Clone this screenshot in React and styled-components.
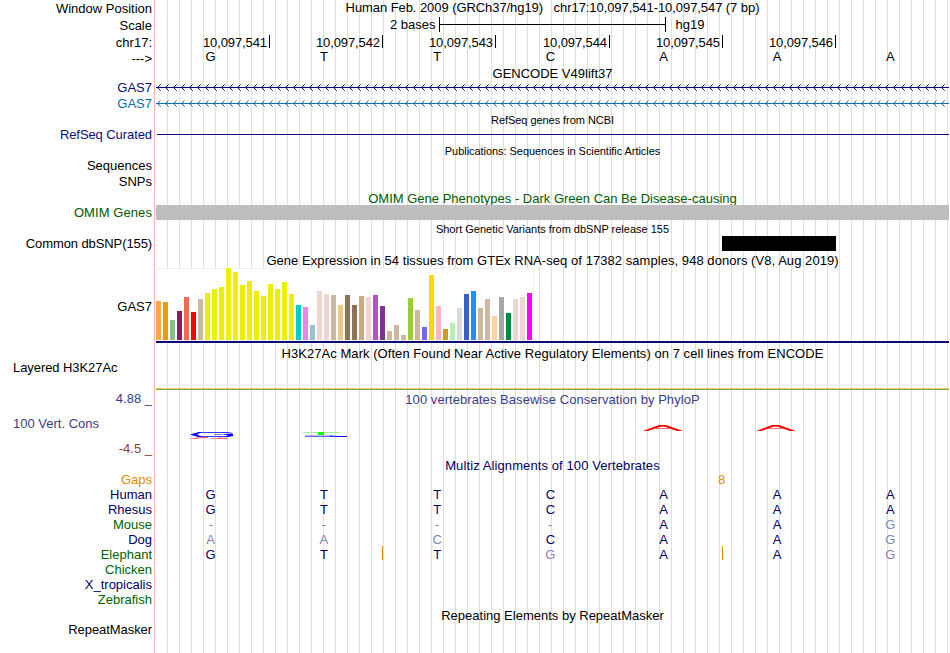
import React from "react";
import styled, { createGlobalStyle } from "styled-components";

const NAVY = "#0c0c78";
const BLUE = "#0c6cb4";
const SPECIES_BLUE = "#000064";
const SPECIES_GREEN = "#006400";
const OMIM_GREEN = "#005a00";
const PHYLO_BLUE = "#3c3c8c";
const ORANGE = "#e68a00";
const FADED = "#8484b8";

const GlobalStyle = createGlobalStyle`
  body { margin: 0; background: #fff; overflow: hidden; }
`;

const Browser = styled.main`
  width: 949px;
  height: 653px;
  overflow: hidden;
  font-family: "Liberation Sans", Arial, sans-serif;
  font-size: 13px;
  color: #000;
  white-space: pre;
  background:
    linear-gradient(#ffb4b4, #ffb4b4) 154px 0 / 1px 100% no-repeat,
    repeating-linear-gradient(90deg, #dcdcfa 0 1px, transparent 1px 12px) 167px 0 / 782px 100% no-repeat,
    #fff;
`;

const Row = styled.div`
  display: grid;
  grid-template-columns: 156px 793px;
  height: ${(p) => p.$h}px;
`;

const Label = styled.div`
  padding: ${(p) => p.$top || 0}px 4px 0 13px;
  text-align: ${(p) => (p.$left ? "left" : "right")};
  line-height: 15px;
  color: ${(p) => p.$color || "#000"};
  letter-spacing: ${(p) => p.$ls || 0}px;
`;

const Title = styled.div`
  grid-column: 2;
  text-align: center;
  padding-top: ${(p) => p.$top || 0}px;
  line-height: 15px;
  font-size: ${(p) => (p.$small ? 11 : 13)}px;
  color: ${(p) => p.$color || "#000"};
  letter-spacing: ${(p) => p.$ls || 0}px;
`;

const Drawing = styled.svg`
  display: block;
  width: 793px;
  height: ${(p) => p.$h}px;
  shape-rendering: ${(p) => (p.$smooth ? "auto" : "crispEdges")};
`;

const Bases = styled.div`
  display: grid;
  grid-template-columns: repeat(7, 113.28px);
  line-height: ${(p) => p.$lh || 15}px;
`;

const Base = styled.span`
  text-align: center;
  padding-right: 4px;
  color: ${(p) => p.$color || "#000"};
`;

const Ruler = styled.div`
  display: grid;
  grid-template-columns: 114px 113px 113px 114px 113px 113px;
  padding-top: 1px;
`;

const Position = styled.span`
  height: 13px;
  line-height: 15px;
  text-align: right;
  padding-right: 2px;
  border-right: 1px solid #000;
  letter-spacing: -0.1px;
`;

const Scale = styled.div`
  display: flex;
  align-items: flex-start;
  line-height: 15px;
  padding-left: 234px;
`;

const ScaleBar = styled.span`
  box-sizing: border-box;
  width: 227px;
  height: 15px;
  margin: 0 10px 0 3px;
  border: solid #000;
  border-width: 0 1px;
  background: linear-gradient(#000, #000) 0 7px / 100% 1px no-repeat;
`;

const Block = styled.div`
  height: 15px;
  margin-left: ${(p) => p.$start}px;
  width: ${(p) => p.$w}px;
  background: ${(p) => p.$color};
`;

const Insert = styled.span`
  padding-left: 562px;
  line-height: 15px;
  color: ${ORANGE};
`;

const AlignmentTrack = styled.div`
  position: relative;
`;

const InsertMark = styled.span`
  position: absolute;
  left: ${(p) => p.$x}px;
  top: -1px;
  width: 1px;
  height: 14px;
  background: ${ORANGE};
`;

function GeneLine({ color, h, y }) {
  const near = [];
  const far = [];
  for (let x = 1; x < 793; x += 8) {
    near.push(`M${x + 1} ${y - 1}h1v1h-1zM${x + 1} ${y + 1}h1v1h-1zM${x + 2} ${y - 2}h1v1h-1zM${x + 2} ${y + 2}h1v1h-1z`);
    far.push(`M${x + 3} ${y - 3}h1v1h-1zM${x + 3} ${y + 3}h1v1h-1z`);
  }
  return (
    <Drawing $h={h}>
      <rect x="0" y={y} width="793" height="1" fill={color} />
      <path d={near.join("")} fill={color} />
      <path d={far.join("")} fill={color} opacity="0.6" />
    </Drawing>
  );
}

const Y = "#eeee00";
const EXPRESSION = [
  [39, "#ffa54f"], [38, "#ee9a00"], [20, "#8fbc8f"], [29, "#8b1c62"], [43, "#ee6a50"],
  [28, "#ff0000"], [41, "#cdb79e"], [47, Y], [51, Y], [53, Y], [72, Y], [68, Y], [55, Y],
  [59, Y], [49, Y], [44, Y], [56, Y], [51, Y], [58, Y], [46, Y], [35, "#00cdcd"],
  [33, "#ee82ee"], [15, "#9ac0cd"], [49, "#eed5d2"], [46, "#eed5d2"], [45, "#cdb79e"],
  [35, "#eec591"], [45, "#8b7355"], [35, "#8b7355"], [44, "#cdaa7d"], [43, "#eed5d2"],
  [45, "#b452cd"], [34, "#7a378b"], [9, "#cdb79e"], [15, "#cdb79e"], [5, "#cdb79e"],
  [42, "#9acd32"], [30, "#cdb79e"], [13, "#7a67ee"], [65, "#ffd700"], [34, "#ffb6c1"],
  [11, "#cd9b1d"], [17, "#b4eeb4"], [32, "#d9d9d9"], [46, "#3a5fcd"], [49, "#1e90ff"],
  [32, "#cdb79e"], [41, "#cdb79e"], [24, "#ffd39b"], [43, "#a6a6a6"], [27, "#008b45"],
  [41, "#eed5d2"], [43, "#eed5d2"], [47, "#ff00ff"],
];

function ExpressionChart() {
  return (
    <Drawing $h={75}>
      <rect x="0" y="0" width="378" height="73" fill="#f0f0f0" />
      <rect x="1" y="1" width="376" height="71" fill="#fff" />
      {EXPRESSION.map(([h, color], i) => (
        <rect key={i} x={i * 7} y={72 - h} width="5" height={h} fill={color} />
      ))}
      <rect x="0" y="73" width="793" height="2" fill={NAVY} />
    </Drawing>
  );
}

function ConservationLogo() {
  return (
    <Drawing $h={33} $smooth>
      <g fill="none" strokeWidth="1">
        <path d="M42 24.5H70" stroke="#3c3cff" />
        <path d="M45 28.5H70" stroke="#3c3cff" />
        <path d="M58 26.5H66" stroke="#8080ff" />
        <path d="M34 30.5H41M55 30.5H64" stroke="#ff9090" />
        <path d="M38 30.5Q44 29.3 52 29.6M62 30Q68 30.6 72 30.2" stroke="#ff4040" />
        <path d="M147 24.5H184" stroke="#a0f0a0" />
        <path d="M149 28.3H176" stroke="#6c6cf0" strokeWidth="1.6" />
        <path d="M174 28L182 28.5H191" stroke="#0000ff" />
      </g>
      <path d="M34 26.5L43 24H46L41 26.5L47 29H42ZM68 24Q76 24 77 25.8L71 25.2ZM66 26H77V28L72 29L68 29L72 27.4Z" fill="#0000ff" />
      <rect x="162" y="24" width="6" height="3" fill="#00ff00" />
      {[487, 600].map((x) => (
        <g key={x}>
          <path d={`M${x} 23L${x + 16} 17H${x + 23}L${x + 40} 23H${x + 34}L${x + 21} 18.4H${x + 18}L${x + 5} 23Z`} fill="#ff0000" />
          <path d={`M${x + 12} 20.5H${x + 27}`} stroke="#ff7070" fill="none" />
        </g>
      ))}
    </Drawing>
  );
}

/* name, label colour, aligned bases, columns that differ from human */
const SPECIES = [
  ["Human", SPECIES_BLUE, "GTTCAAA", []],
  ["Rhesus", SPECIES_BLUE, "GTTCAAA", []],
  ["Mouse", SPECIES_GREEN, "----AAG", [0, 1, 2, 3, 6]],
  ["Dog", SPECIES_BLUE, "AACCAAG", [0, 1, 2, 6]],
  ["Elephant", SPECIES_GREEN, "GTTGAAG", [3, 6], [226, 566]],
  ["Chicken", SPECIES_GREEN, "", []],
  ["X_tropicalis", SPECIES_BLUE, "", []],
  ["Zebrafish", SPECIES_GREEN, "", []],
];

export default function App() {
  return (
    <>
      <GlobalStyle />
      <Browser>
        <Row $h={17}>
          <Label $top={1}>Window Position</Label>
          <Title $ls={-0.07}>Human Feb. 2009 (GRCh37/hg19)   chr17:10,097,541-10,097,547 (7 bp)</Title>
        </Row>
        <Row $h={17}>
          <Label $top={1}>Scale</Label>
          <Scale><span>2 bases</span><ScaleBar /><span>hg19</span></Scale>
        </Row>
        <Row $h={16}>
          <Label $top={1}>chr17:</Label>
          <Ruler>
            {[1, 2, 3, 4, 5, 6].map((n) => <Position key={n}>{`10,097,54${n}`}</Position>)}
          </Ruler>
        </Row>
        <Row $h={16}>
          <Label $top={1}>{"--->"}</Label>
          <Bases $lh={13}>{[..."GTTCAAA"].map((b, i) => <Base key={i}>{b}</Base>)}</Bases>
        </Row>
        <Row $h={14}><Title>GENCODE V49lift37</Title></Row>
        <Row $h={15}>
          <Label $color={NAVY}>GAS7</Label>
          <GeneLine color={NAVY} h={15} y={7} />
        </Row>
        <Row $h={16}>
          <Label $top={1} $color={BLUE}>GAS7</Label>
          <GeneLine color={BLUE} h={16} y={8} />
        </Row>
        <Row $h={16}><Title $small $top={2} $ls={-0.05}>RefSeq genes from NCBI</Title></Row>
        <Row $h={15}>
          <Label $color={NAVY} $ls={-0.08}>RefSeq Curated</Label>
          <Drawing $h={15}><rect x="1" y="7" width="792" height="1" fill={NAVY} /></Drawing>
        </Row>
        <Row $h={16}><Title $small $top={2} $ls={-0.05}>Publications: Sequences in Scientific Articles</Title></Row>
        <Row $h={15}><Label>Sequences</Label></Row>
        <Row $h={16}><Label $top={1}>SNPs</Label></Row>
        <Row $h={16}><Title $top={2} $color={OMIM_GREEN}>OMIM Gene Phenotypes - Dark Green Can Be Disease-causing</Title></Row>
        <Row $h={15}>
          <Label $color={OMIM_GREEN} $ls={0.08}>OMIM Genes</Label>
          <Block $start={0} $w={793} $color="#bebebe" />
        </Row>
        <Row $h={16}><Title $small $top={2}>Short Genetic Variants from dbSNP release 155</Title></Row>
        <Row $h={15}>
          <Label $ls={-0.1}>Common dbSNP(155)</Label>
          <Block $start={566} $w={114} $color="#000" />
        </Row>
        <Row $h={17}><Title $top={2} $ls={0.055}>Gene Expression in 54 tissues from GTEx RNA-seq of 17382 samples, 948 donors (V8, Aug 2019)</Title></Row>
        <Row $h={75}>
          <Label $top={31}>GAS7</Label>
          <ExpressionChart />
        </Row>
        <Row $h={17}><Title $top={3} $ls={0.05}>H3K27Ac Mark (Often Found Near Active Regulatory Elements) on 7 cell lines from ENCODE</Title></Row>
        <Row $h={31}>
          <Label $left $ls={-0.07}>Layered H3K27Ac</Label>
          <Drawing $h={31}>
            <rect y="28" width="793" height="1" fill="#ffc060" />
            <rect y="29" width="793" height="1" fill="#72b450" />
          </Drawing>
        </Row>
        <Row $h={17}>
          <Label $color={PHYLO_BLUE}>4.88 _</Label>
          <Title $top={1} $color={PHYLO_BLUE} $ls={0.05}>100 vertebrates Basewise Conservation by PhyloP</Title>
        </Row>
        <Row $h={33}>
          <Label $left $top={8} $color={PHYLO_BLUE}>100 Vert. Cons</Label>
          <ConservationLogo />
        </Row>
        <Row $h={16}><Label $color="#8c3c3c">-4.5 _</Label></Row>
        <Row $h={15}><Title $top={1} $color={SPECIES_BLUE} $ls={0.1}>Multiz Alignments of 100 Vertebrates</Title></Row>
        <Row $h={15}>
          <Label $color={ORANGE}>Gaps</Label>
          <Insert>8</Insert>
        </Row>
        {SPECIES.map(([name, color, bases, differing, inserts = []]) => (
          <Row key={name} $h={15}>
            <Label $color={color}>{name}</Label>
            <AlignmentTrack>
              <Bases>
                {[...bases].map((b, i) => (
                  <Base key={i} $color={differing.includes(i) ? FADED : SPECIES_BLUE}>{b}</Base>
                ))}
              </Bases>
              {inserts.map((x) => <InsertMark key={x} $x={x} />)}
            </AlignmentTrack>
          </Row>
        ))}
        <Row $h={15}><Title $top={1}>Repeating Elements by RepeatMasker</Title></Row>
        <Row $h={31}><Label $ls={-0.07}>RepeatMasker</Label></Row>
      </Browser>
    </>
  );
}
